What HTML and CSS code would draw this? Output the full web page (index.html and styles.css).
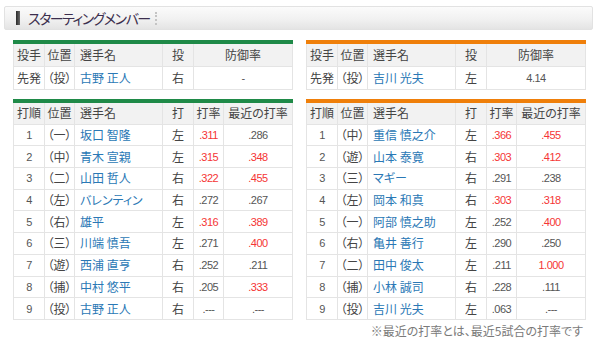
FILE: index.html
```html
<!DOCTYPE html>
<html lang="ja">
<head>
<meta charset="utf-8">
<title>スターティングメンバー</title>
<link rel="stylesheet" href="styles.css">
</head>
<body>
<div class="page">
  <div class="titlebar">
    <span class="mark"></span>
    <h2 class="title">スターティングメンバー</h2>
    <span class="sep"></span>
  </div>
  <div class="teams">
    <div class="team team-g">
      <table class="tbl pitcher">
        <colgroup><col class="c1"><col class="c2"><col class="c3"><col class="c4"><col class="c56"></colgroup>
        <tr><th>投手</th><th>位置</th><th class="l">選手名</th><th>投</th><th>防御率</th></tr>
        <tr><td>先発</td><td>（投）</td><td class="name">古野 正人</td><td>右</td><td class="num">-</td></tr>
      </table>
      <table class="tbl lineup">
        <colgroup><col class="c1"><col class="c2"><col class="c3"><col class="c4"><col class="c5"><col class="c6"></colgroup>
        <tr><th>打順</th><th>位置</th><th class="l">選手名</th><th>打</th><th>打率</th><th>最近の打率</th></tr>
        <tr><td class="num">1</td><td>（一）</td><td class="name">坂口 智隆</td><td>左</td><td class="num red">.311</td><td class="num">.286</td></tr>
        <tr><td class="num">2</td><td>（中）</td><td class="name">青木 宣親</td><td>左</td><td class="num red">.315</td><td class="num red">.348</td></tr>
        <tr><td class="num">3</td><td>（二）</td><td class="name">山田 哲人</td><td>右</td><td class="num red">.322</td><td class="num red">.455</td></tr>
        <tr><td class="num">4</td><td>（左）</td><td class="name">バレンティン</td><td>右</td><td class="num">.272</td><td class="num">.267</td></tr>
        <tr><td class="num">5</td><td>（右）</td><td class="name">雄平</td><td>左</td><td class="num red">.316</td><td class="num red">.389</td></tr>
        <tr><td class="num">6</td><td>（三）</td><td class="name">川端 慎吾</td><td>左</td><td class="num">.271</td><td class="num red">.400</td></tr>
        <tr><td class="num">7</td><td>（遊）</td><td class="name">西浦 直亨</td><td>右</td><td class="num">.252</td><td class="num">.211</td></tr>
        <tr><td class="num">8</td><td>（捕）</td><td class="name">中村 悠平</td><td>右</td><td class="num">.205</td><td class="num red">.333</td></tr>
        <tr><td class="num">9</td><td>（投）</td><td class="name">古野 正人</td><td>右</td><td class="num">.---</td><td class="num">.---</td></tr>
      </table>
    </div>
    <div class="team team-o">
      <table class="tbl pitcher">
        <colgroup><col class="c1"><col class="c2"><col class="c3"><col class="c4"><col class="c56"></colgroup>
        <tr><th>投手</th><th>位置</th><th class="l">選手名</th><th>投</th><th>防御率</th></tr>
        <tr><td>先発</td><td>（投）</td><td class="name">吉川 光夫</td><td>左</td><td class="num">4.14</td></tr>
      </table>
      <table class="tbl lineup">
        <colgroup><col class="c1"><col class="c2"><col class="c3"><col class="c4"><col class="c5"><col class="c6"></colgroup>
        <tr><th>打順</th><th>位置</th><th class="l">選手名</th><th>打</th><th>打率</th><th>最近の打率</th></tr>
        <tr><td class="num">1</td><td>（中）</td><td class="name">重信 慎之介</td><td>左</td><td class="num red">.366</td><td class="num red">.455</td></tr>
        <tr><td class="num">2</td><td>（遊）</td><td class="name">山本 泰寛</td><td>右</td><td class="num red">.303</td><td class="num red">.412</td></tr>
        <tr><td class="num">3</td><td>（三）</td><td class="name">マギー</td><td>右</td><td class="num">.291</td><td class="num">.238</td></tr>
        <tr><td class="num">4</td><td>（左）</td><td class="name">岡本 和真</td><td>右</td><td class="num red">.303</td><td class="num red">.318</td></tr>
        <tr><td class="num">5</td><td>（一）</td><td class="name">阿部 慎之助</td><td>左</td><td class="num">.252</td><td class="num red">.400</td></tr>
        <tr><td class="num">6</td><td>（右）</td><td class="name">亀井 善行</td><td>左</td><td class="num">.290</td><td class="num">.250</td></tr>
        <tr><td class="num">7</td><td>（二）</td><td class="name">田中 俊太</td><td>左</td><td class="num">.211</td><td class="num red">1.000</td></tr>
        <tr><td class="num">8</td><td>（捕）</td><td class="name">小林 誠司</td><td>右</td><td class="num">.228</td><td class="num">.111</td></tr>
        <tr><td class="num">9</td><td>（投）</td><td class="name">吉川 光夫</td><td>左</td><td class="num">.063</td><td class="num">.---</td></tr>
      </table>
      <p class="note">※最近の打率とは、最近5試合の打率です</p>
    </div>
  </div>
</div>
</body>
</html>
```

FILE: styles.css
```css
html, body {
  margin: 0;
  padding: 0;
  background: #ffffff;
}
body {
  font-family: "Noto Sans CJK JP", "Noto Sans", sans-serif;
  font-feature-settings: "palt";
  color: #444444;
}
.page {
  padding: 6px 7px 0 4px;
}
.titlebar {
  height: 22px;
  border: 1px solid #e2e2e2;
  border-radius: 2px;
  background: linear-gradient(#fbfbfb, #f1f1f1 55%, #e4e4e4);
  display: flex;
  align-items: center;
  padding-left: 11px;
}
.mark {
  width: 4px;
  height: 14px;
  background: linear-gradient(to right, #2a2a2a, #6a6a6a);
}
.title {
  margin: 0 0 0 8px;
  font-size: 14px;
  font-weight: normal;
  color: #3b2e4d;
  line-height: 22px;
  letter-spacing: -1.5px;
}
.sep {
  margin-left: 5px;
  height: 13px;
  border-left: 2px dotted #c4c4c4;
}
.teams {
  display: flex;
  gap: 14px;
  padding: 0 8px 0 9px;
  margin-top: 10px;
}
.team {
  width: 279px;
}
.tbl {
  width: 279px;
  border-collapse: collapse;
  table-layout: fixed;
  font-size: 12px;
}
.team-g .tbl { border-top: 4px solid #1f8a48; }
.team-o .tbl { border-top: 4px solid #ef7f0a; }
.lineup { margin-top: 9px; }
.c1 { width: 31px; }
.c2 { width: 30px; }
.c3 { width: 88px; }
.c4 { width: 31px; }
.c5 { width: 30px; }
.c6 { width: 69px; }
.c56 { width: 99px; }
.tbl th, .tbl td {
  border: 1px solid #e4e4e4;
  height: 22px;
  padding: 0;
  text-align: center;
  white-space: nowrap;
  font-weight: normal;
  line-height: 20px;
}
.tbl th {
  background: #f2f2f2;
  color: #444444;
}
.tbl td { color: #444444; }
.lineup th, .lineup td { height: 20.7px; }
.tbl .l { text-align: left; padding-left: 5px; }
.tbl .name {
  text-align: left;
  padding-left: 5px;
  color: #2a78b5;
}
.tbl .num {
  font-family: "Liberation Sans", Arial, sans-serif;
  font-size: 11px;
  letter-spacing: -0.5px;
  color: #555555;
}
.tbl .red { color: #f53535; }
.note {
  margin: 3px 2px 0 0;
  text-align: right;
  font-size: 12px;
  color: #7a7a7a;
  line-height: 16px;
}
```
